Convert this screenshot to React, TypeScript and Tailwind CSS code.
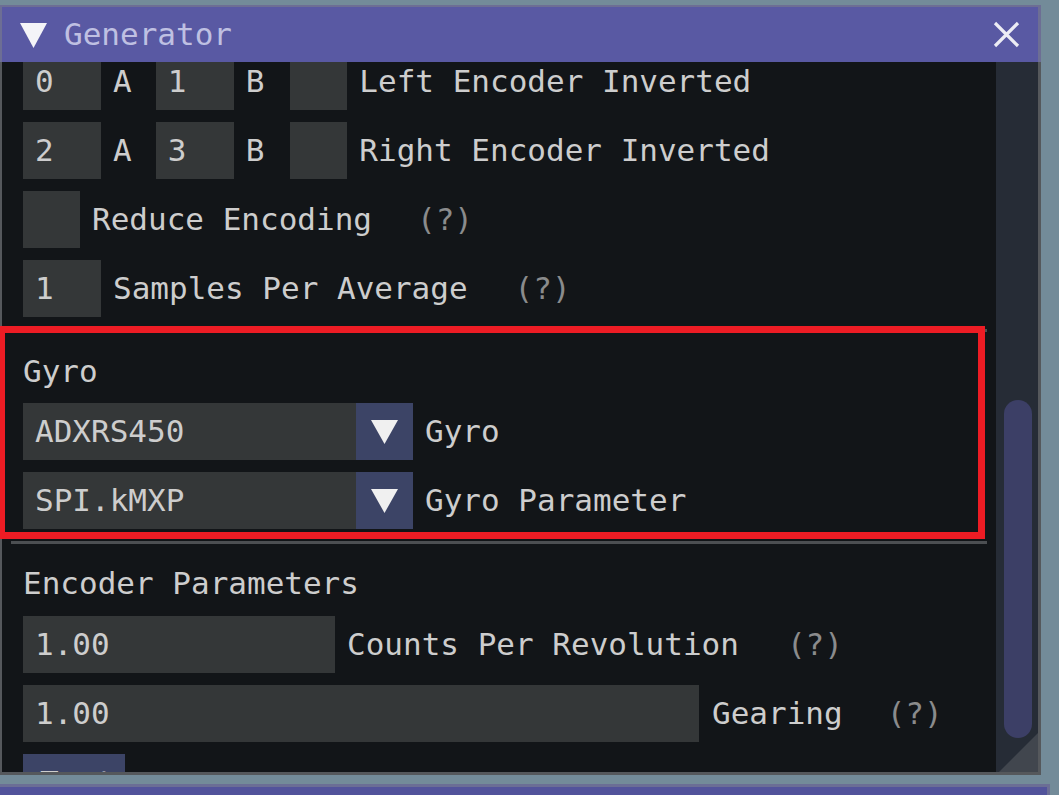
import React from "react";

const font = { fontFamily: '"DejaVu Sans Mono", "Liberation Mono", monospace' };

function Frame({ className, children }: { className: string; children?: React.ReactNode }) {
  return (
    <div className={"h-[57px] shrink-0 bg-[#343738] flex items-center pl-[12px] text-[#cdcdcd] " + className}>
      {children}
    </div>
  );
}

function Label({ className, children }: { className: string; children: React.ReactNode }) {
  return <span className={"shrink-0 whitespace-pre text-[#cdcdcd] " + className}>{children}</span>;
}

function Help({ className }: { className: string }) {
  return <span className={"shrink-0 whitespace-pre text-[#8a8b8c] " + className}>(?)</span>;
}

function Arrow() {
  return (
    <svg width="27" height="27" viewBox="0 0 27 27">
      <polygon points="0,2 27,2 13.5,26" fill="#f0f0f0" />
    </svg>
  );
}

function Combo({ value, label }: { value: string; label: string }) {
  return (
    <div className="h-[57px] flex items-center">
      <div className="h-[57px] w-[333px] bg-[#343738] flex items-center pl-[12px] text-[#cdcdcd]">{value}</div>
      <div className="h-[57px] w-[57px] bg-[#3c4466] flex items-center justify-center">
        <Arrow />
      </div>
      <Label className="ml-[12px]">{label}</Label>
    </div>
  );
}

function Separator() {
  return <div className="h-[3px] -ml-[12px] w-[976px] bg-[#4c4f52] shrink-0" />;
}

export default function App() {
  return (
    <div
      className="w-[1059px] h-[795px] bg-[#738b99] relative overflow-hidden text-[31px] leading-none"
      style={font}
    >
      <div className="pt-[5px]">
        <div className="w-[1041px] flex flex-col">
          {/* title bar */}
          <div className="h-[57px] border-t-[2px] border-l-[2px] border-r-[3px] border-[#6d6e94] bg-[#5959a3] flex items-center">
            <div className="ml-[18px] mt-[2px]">
              <svg width="27" height="27" viewBox="0 0 27 27">
                <polygon points="0,1 27,1 13.5,26" fill="#f4f4f8" />
              </svg>
            </div>
            <span className="ml-[17px] text-[#bfc0e2] whitespace-pre">Generator</span>
            <div className="ml-auto mr-[18px]">
              <svg width="27" height="27" viewBox="0 0 27 27">
                <path d="M2 2 L25 25 M25 2 L2 25" stroke="#ececf4" strokeWidth="3.2" />
              </svg>
            </div>
          </div>
          {/* body */}
          <div className="h-[713px] border-l-[2px] border-r-[3px] border-b-[3px] border-[#55585c] bg-[#121518] flex relative">
            <div className="w-[994px] h-[710px] overflow-hidden pl-[21px]">
              <div className="-mt-[9px] flex flex-col">
                <div className="h-[57px] flex items-center">
                  <Frame className="w-[78px]">0</Frame>
                  <Label className="ml-[12px]">A</Label>
                  <Frame className="w-[78px] ml-[24px]">1</Frame>
                  <Label className="ml-[12px]">B</Label>
                  <Frame className="w-[57px] ml-[26px]" />
                  <Label className="ml-[12px]">Left Encoder Inverted</Label>
                </div>
                <div className="h-[57px] flex items-center mt-[12px]">
                  <Frame className="w-[78px]">2</Frame>
                  <Label className="ml-[12px]">A</Label>
                  <Frame className="w-[78px] ml-[24px]">3</Frame>
                  <Label className="ml-[12px]">B</Label>
                  <Frame className="w-[57px] ml-[26px]" />
                  <Label className="ml-[12px]">Right Encoder Inverted</Label>
                </div>
                <div className="h-[57px] flex items-center mt-[12px]">
                  <Frame className="w-[57px]" />
                  <Label className="ml-[12px]">Reduce Encoding</Label>
                  <Help className="ml-[45px]" />
                </div>
                <div className="h-[57px] flex items-center mt-[12px]">
                  <Frame className="w-[78px]">1</Frame>
                  <Label className="ml-[12px]">Samples Per Average</Label>
                  <Help className="ml-[47px]" />
                </div>
                <div className="mt-[12px]">
                  <Separator />
                </div>
                <div className="mt-[15px] h-[48px] flex items-center">
                  <Label className="">Gyro</Label>
                </div>
                <div className="mt-[8px]">
                  <Combo value="ADXRS450" label="Gyro" />
                </div>
                <div className="mt-[12px]">
                  <Combo value="SPI.kMXP" label="Gyro Parameter" />
                </div>
                <div className="mt-[12px]">
                  <Separator />
                </div>
                <div className="mt-[15px] h-[48px] flex items-center">
                  <Label className="">Encoder Parameters</Label>
                </div>
                <div className="mt-[9px] h-[57px] flex items-center">
                  <Frame className="w-[312px]">1.00</Frame>
                  <Label className="ml-[12px]">Counts Per Revolution</Label>
                  <Help className="ml-[48px]" />
                </div>
                <div className="mt-[12px] h-[57px] flex items-center">
                  <Frame className="w-[676px]">1.00</Frame>
                  <Label className="ml-[13px]">Gearing</Label>
                  <Help className="ml-[44px]" />
                </div>
                <div className="mt-[12px] h-[57px] w-[102px] bg-[#3c4466] flex items-center pl-[17px] text-[#cdcdcd]">
                  Test
                </div>
              </div>
            </div>
            {/* scrollbar */}
            <div className="w-[42px] h-[710px] bg-[#262c36] flex flex-col">
              <div className="h-[338px] shrink-0" />
              <div className="h-[338px] ml-[8px] mr-[6px] rounded-full bg-[#3c3f66]" />
            </div>
            {/* resize grip */}
            <svg className="absolute right-0 bottom-0" width="39" height="39" viewBox="0 0 39 39">
              <polygon points="39,0 39,39 0,39" fill="#41464e" />
            </svg>
          </div>
        </div>
        {/* next window */}
        <div className="mt-[9px] w-[1050px] h-[11px] border-t-[3px] border-r-[3px] border-[#6b6e95] bg-[#52539b]" />
      </div>
      {/* red highlight */}
      <div className="absolute left-[-2px] top-[326px] w-[987px] h-[213px] border-[7px] border-[#ed1c24]" />
    </div>
  );
}
